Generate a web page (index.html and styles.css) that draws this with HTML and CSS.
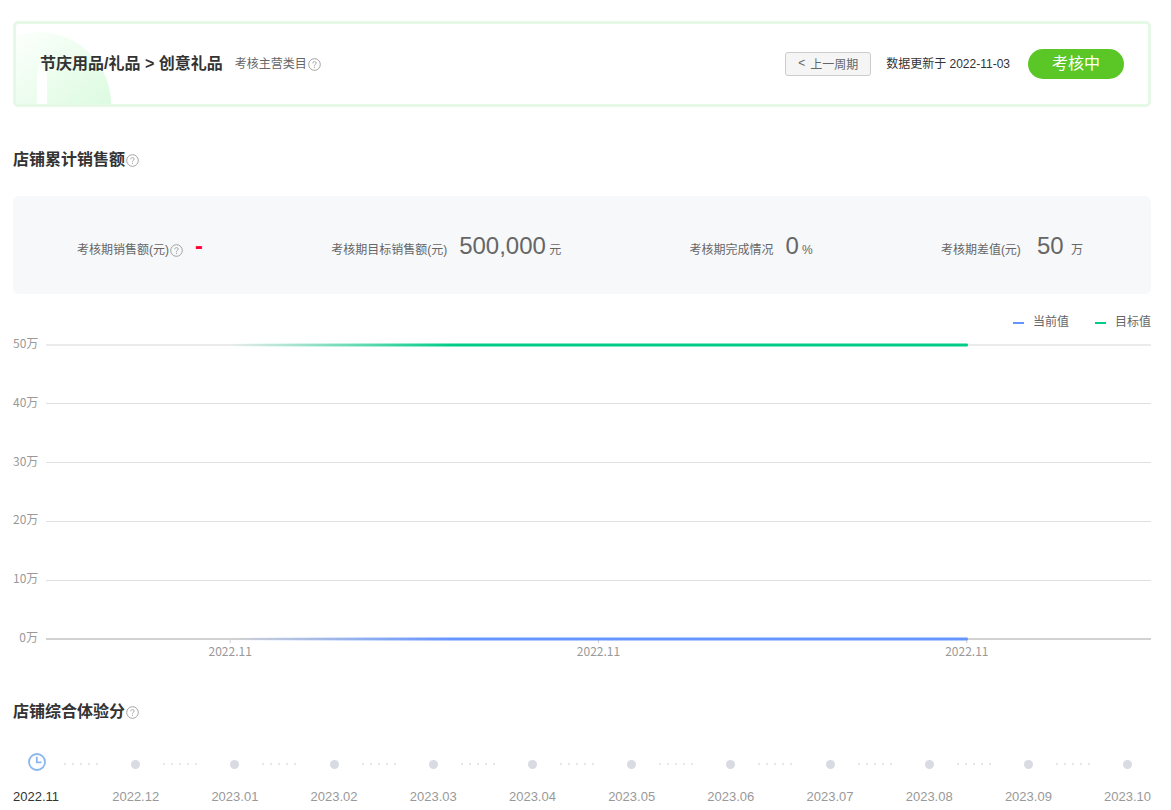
FILE: index.html
```html
<!DOCTYPE html>
<html lang="zh-CN">
<head>
    <meta charset="UTF-8">
    <meta name="viewport" content="width=device-width, initial-scale=1.0">
    <title>店铺考核</title>
    <link rel="stylesheet" href="styles.css">
</head>
<body>
    <!-- shared icons -->
    <svg class="sprite" aria-hidden="true">
        <symbol id="help" viewBox="0 0 13 13">
            <circle cx="6.5" cy="6.5" r="5.8" fill="none" stroke="currentColor" stroke-width="0.9"/>
            <path d="M4.8 5.3c0-1 .7-1.7 1.7-1.7s1.7.6 1.7 1.5c0 1.200-1.700 1.200-1.700 2.600" fill="none" stroke="currentColor" stroke-width="0.9"/>
            <circle cx="6.5" cy="9.200" r="0.6" fill="currentColor"/>
        </symbol>
    </svg>

    <header class="category">
        <svg class="category-bg" viewBox="0 0 96 80" aria-hidden="true">
            <defs>
                <linearGradient id="leaf" x1="0" y1="0.1" x2="1" y2="1">
                    <stop offset="0" stop-color="#fbfffb"/>
                    <stop offset="1" stop-color="#dcfbe0"/>
                </linearGradient>
                <linearGradient id="stem" x1="0" y1="0" x2="0" y2="1">
                    <stop offset="0" stop-color="#fff" stop-opacity="0"/>
                    <stop offset="0.5" stop-color="#fff"/>
                </linearGradient>
            </defs>
            <path d="M0 12A72 72 0 0 1 95 80H0Z" fill="url(#leaf)"/>
            <rect x="21" y="30" width="10" height="50" fill="url(#stem)"/>
        </svg>
        <h1>节庆用品/礼品 &gt; 创意礼品</h1>
        <span class="hint">考核主营类目<svg class="help"><use href="#help"/></svg></span>
        <button class="prev" type="button"><span>&lt;</span><span>上一周期</span></button>
        <span class="updated">数据更新于 2022-11-03</span>
        <span class="status">考核中</span>
    </header>

    <section class="sales">
        <h2>店铺累计销售额<svg class="help"><use href="#help"/></svg></h2>

        <dl class="summary">
            <div class="stat">
                <dt>考核期销售额(元)<svg class="help"><use href="#help"/></svg></dt>
                <dd><b class="empty">-</b></dd>
            </div>
            <div class="stat">
                <dt>考核期目标销售额(元)</dt>
                <dd><b>500,000</b> 元</dd>
            </div>
            <div class="stat">
                <dt>考核期完成情况</dt>
                <dd><b>0</b> %</dd>
            </div>
            <div class="stat wide">
                <dt>考核期差值(元)</dt>
                <dd><b>50</b> 万</dd>
            </div>
        </dl>

        <ul class="legend">
            <li class="current">当前值</li>
            <li class="target">目标值</li>
        </ul>

        <div class="chart">
            <div class="y-axis">
                <span>50万</span>
                <span>40万</span>
                <span>30万</span>
                <span>20万</span>
                <span>10万</span>
                <span>0万</span>
            </div>
            <svg class="plot" aria-hidden="true">
                <defs>
                    <linearGradient id="green">
                        <stop offset="0" stop-color="#0c8" stop-opacity="0"/>
                        <stop offset="0.3" stop-color="#0c8"/>
                    </linearGradient>
                    <linearGradient id="blue">
                        <stop offset="0" stop-color="#6495ff" stop-opacity="0"/>
                        <stop offset="0.3" stop-color="#6495ff"/>
                    </linearGradient>
                </defs>
                <g fill="#e0e0e0">
                    <rect y="9" width="100%" height="2" fill="#ebebeb"/>
                    <rect y="68" width="100%" height="1"/>
                    <rect y="127" width="100%" height="1"/>
                    <rect y="186" width="100%" height="1"/>
                    <rect y="245" width="100%" height="1"/>
                </g>
                <rect y="303" width="100%" height="2" fill="#d2d2d2"/>
                <g stroke="#ccc">
                    <line x1="16.67%" y1="304" x2="16.67%" y2="308"/>
                    <line x1="50%" y1="304" x2="50%" y2="308"/>
                    <line x1="83.33%" y1="304" x2="83.33%" y2="308"/>
                </g>
                <rect x="16.67%" y="8.500" width="66.76%" height="3" rx="1" fill="url(#green)"/>
                <rect x="16.67%" y="302.500" width="66.76%" height="3" rx="1" fill="url(#blue)"/>
            </svg>
            <div class="x-axis">
                <span>2022.11</span>
                <span>2022.11</span>
                <span>2022.11</span>
            </div>
        </div>
    </section>

    <section class="score">
        <h2>店铺综合体验分<svg class="help"><use href="#help"/></svg></h2>

        <ol class="timeline">
            <li class="active">
                <span class="mark"><svg class="clock" viewBox="0 0 18 18"><circle cx="9" cy="9" r="8" fill="none" stroke="#8ab6f0" stroke-width="1.800"/><path d="M8.800 3.800V9.300H13.500" fill="none" stroke="#8ab6f0" stroke-width="1.800"/></svg></span>
                <span class="month">2022.11</span>
            </li>
            <li><span class="mark"></span><span class="month">2022.12</span></li>
            <li><span class="mark"></span><span class="month">2023.01</span></li>
            <li><span class="mark"></span><span class="month">2023.02</span></li>
            <li><span class="mark"></span><span class="month">2023.03</span></li>
            <li><span class="mark"></span><span class="month">2023.04</span></li>
            <li><span class="mark"></span><span class="month">2023.05</span></li>
            <li><span class="mark"></span><span class="month">2023.06</span></li>
            <li><span class="mark"></span><span class="month">2023.07</span></li>
            <li><span class="mark"></span><span class="month">2023.08</span></li>
            <li><span class="mark"></span><span class="month">2023.09</span></li>
            <li><span class="mark"></span><span class="month">2023.10</span></li>
        </ol>
    </section>
</body>
</html>
```
FILE: styles.css
```css
* {
    box-sizing: border-box;
}

body {
    margin: 0;
    padding: 21px 20px 0 13px;
    background-color: #fff;
    color: #333;
    font-family: "Liberation Sans", "Noto Sans CJK SC", sans-serif;
    font-size: 12px;
    line-height: 20px;
}

h1, h2 {
    margin: 0;
    font-size: 16px;
    line-height: 24px;
    color: #333;
}

ul, ol, dl, dd {
    margin: 0;
    padding: 0;
    list-style-type: none;
}

.sprite {
    display: none;
}

.help {
    width: 13px;
    height: 13px;
    margin-left: 1px;
    color: #999;
    flex: none;
}

/* Top bar */
.category {
    position: relative;
    display: flex;
    align-items: center;
    height: 86px;
    padding: 0 24px;
    border: 3px solid #e6f8e6;
    border-radius: 5px;
}

.category-bg {
    position: absolute; /* Sits behind the title */
    left: 0;
    bottom: 0;
    width: 96px;
    height: 80px;
    z-index: -1;
}

.hint {
    display: flex;
    align-items: center;
    margin-left: 12px;
    color: #666;
}

.prev {
    display: flex;
    align-items: center;
    gap: 5px;
    height: 24px;
    margin-left: auto;
    padding: 0 12px 2px;
    background-color: #f5f5f5;
    border: 1px solid #ccc;
    border-radius: 3px;
    color: #666;
    font-family: inherit;
    font-size: 12px;
    cursor: pointer;
}

.updated {
    margin-left: 15px;
}

.status {
    width: 96px;
    margin-left: 18px;
    background-color: #5bc726;
    border-radius: 15px;
    color: #fff;
    font-size: 16px;
    line-height: 30px;
    text-align: center;
}

/* Sections */
h2 {
    display: flex;
    align-items: center;
}

.sales {
    margin-top: 41px;
}

.summary {
    display: flex;
    justify-content: space-around;
    height: 98px;
    margin-top: 24px;
    padding: 34px 4px 0 0;
    background-color: #f7f8fa;
    border-radius: 6px;
    color: #666;
}

.stat {
    display: flex;
    align-items: baseline;
    gap: 12px;
    height: 32px;
    line-height: 32px;
}

.stat.wide {
    gap: 16px;
}

.stat.wide b {
    margin-right: 4px;
}

.stat .help {
    vertical-align: -3px;
}

.stat b {
    font-size: 24px;
    font-weight: normal;
}

.stat .empty {
    color: #ff0036;
    font-weight: bold;
}

/* Chart */
.legend {
    display: flex;
    justify-content: flex-end;
    gap: 26px;
    margin-top: 18px;
    color: #666;
}

.legend li {
    display: flex;
    align-items: center;
    gap: 9px;
}

.legend li::before {
    content: "";
    width: 11px;
    height: 2px;
    margin-top: 2px;
    background-color: #6495ff;
}

.legend .target::before {
    background-color: #0c8;
}

.chart {
    display: grid;
    grid-template-columns: 25px 1fr;
    column-gap: 8px;
    margin-top: 3px;
    color: #999;
    font-family: "Noto Sans CJK SC", sans-serif;
}

.y-axis {
    display: flex;
    flex-direction: column;
    justify-content: space-between;
    height: 314px;
    margin-top: -2px;
    text-align: right;
    white-space: nowrap;
}

.plot {
    width: 100%;
    height: 308px;
}

.x-axis {
    grid-column: 2;
    display: grid;
    grid-template-columns: repeat(3, 1fr);
    margin-top: -6px;
    text-align: center;
}

/* Timeline */
.score {
    margin-top: 39px;
}

.timeline {
    display: flex;
    margin-top: 27px;
    color: #999;
    font-size: 13px;
}

.timeline li {
    flex: 1;
    display: grid;
    grid-template-columns: 47px 1fr;
    row-gap: 12px;
}

.timeline li:last-child {
    flex: none;
    width: 47px;
}

.timeline .active {
    color: #333;
}

.mark {
    display: flex;
    align-items: center;
    justify-content: center;
    height: 24px;
    padding-top: 2px;
}

.month {
    grid-column: 1;
    grid-row: 2;
}

.mark:empty::before {
    content: "";
    width: 9px;
    height: 9px;
    background-color: #d8dbe1;
    border-radius: 50%;
}

.clock {
    width: 18px;
    height: 18px;
}

.active .mark {
    padding: 0 0 2px;
}

/* Dots between two months */
.timeline li:not(:last-child)::after {
    content: "";
    grid-column: 2;
    grid-row: 1;
    align-self: center;
    width: 34px;
    height: 2px;
    margin: 2px 0 0 4px;
    background: repeating-linear-gradient(to right, #e4e6ea 0 2px, transparent 2px 8px);
}
```
